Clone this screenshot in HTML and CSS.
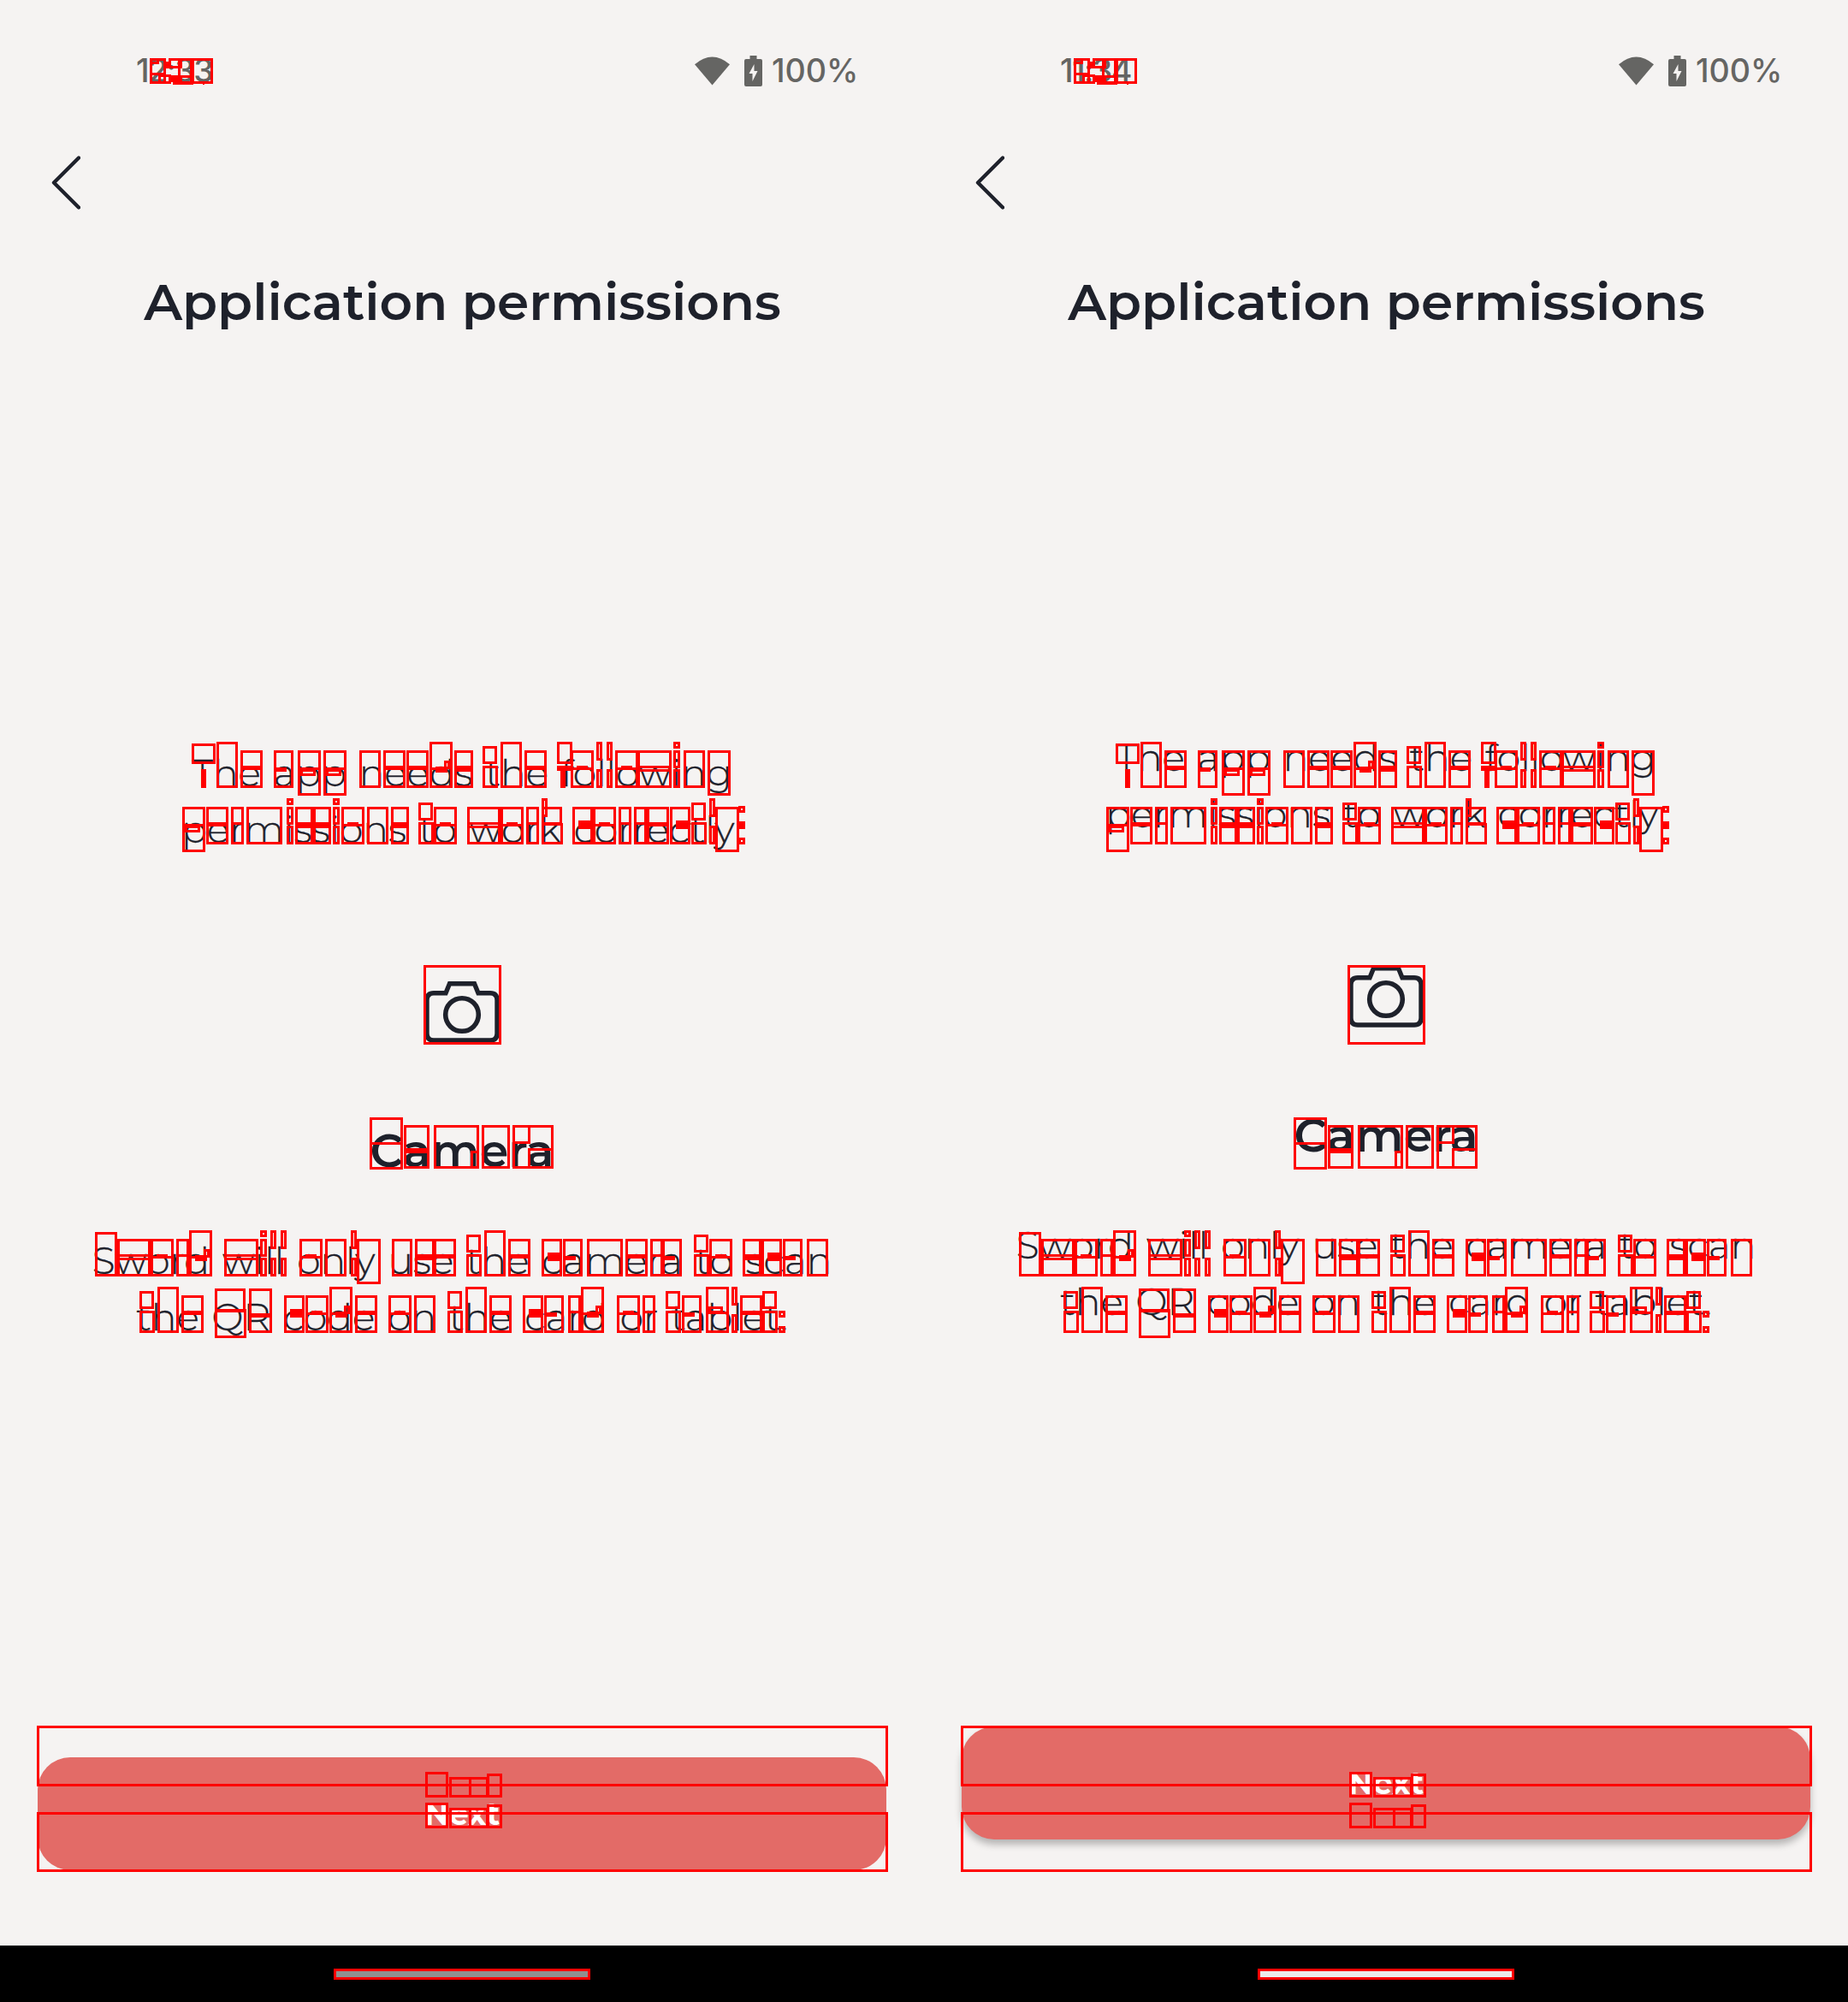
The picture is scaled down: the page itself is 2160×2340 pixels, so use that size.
FILE: index.html
```html
<!DOCTYPE html>
<html lang="en">
<head>
<meta charset="utf-8">
<title>Application permissions</title>
<link rel="stylesheet" href="styles.css">
</head>
<body>
<svg class="defs" width="0" height="0">
  <symbol id="wifi" viewBox="0 0 42 34"><path d="M0 9Q21-9 42 9L21 34Z"/></symbol>
  <symbol id="battery" viewBox="0 0 21 36"><path fill-rule="evenodd" d="M6.500 0H14.500V4H19Q21 4 21 6V34Q21 36 19 36H2Q0 36 0 34V6Q0 4 2 4H6.500ZM11.500 10L5.500 21H9.500V30L15.500 18H11.500Z"/></symbol>
  <symbol id="back" viewBox="0 0 34 64"><path d="M32 2.500L3 31.500L32 60.500" fill="none" stroke="currentColor" stroke-width="4.400" stroke-linecap="round" stroke-linejoin="round"/></symbol>
  <symbol id="camera" viewBox="0 0 90 84"><path d="M12 20.800H26L30.500 9.800H59.500L64 20.800H78Q86 20.800 86 29V68Q86 76 78 76H12Q4 76 4 68V29Q4 20.800 12 20.800Z" fill="none" stroke="currentColor" stroke-width="5.400"/><circle cx="45" cy="46" r="19.300" fill="none" stroke="currentColor" stroke-width="5.600"/></symbol>
</svg>
<div class="compare">
  <section class="screen before">
    <header class="top">
      <div class="status"><span class="time">12:33</span><svg class="wifi"><use href="#wifi"/></svg><svg class="battery"><use href="#battery"/></svg><span class="level">100%</span></div>
      <svg class="back"><use href="#back"/></svg>
      <h1 class="heading">Application permissions</h1>
    </header>
    <main class="content">
      <p class="copy"><span class="line">The app needs the following</span><span class="line">permissions to work correctly:</span></p>
      <svg class="camera"><use href="#camera"/></svg>
      <h2 class="name">Camera</h2>
      <p class="copy"><span class="line">Sword will only use the camera to scan</span><span class="line">the QR code on the card or tablet.</span></p>
    </main>
    <button class="next">Next</button>
    <footer class="nav"><span class="pill"></span></footer>
    <svg class="marks"></svg>
  </section>
  <section class="screen after">
    <header class="top">
      <div class="status"><span class="time">11:34</span><svg class="wifi"><use href="#wifi"/></svg><svg class="battery"><use href="#battery"/></svg><span class="level">100%</span></div>
      <svg class="back"><use href="#back"/></svg>
      <h1 class="heading">Application permissions</h1>
    </header>
    <main class="content">
      <p class="copy"><span class="line">The app needs the following</span><span class="line">permissions to work correctly:</span></p>
      <svg class="camera"><use href="#camera"/></svg>
      <h2 class="name">Camera</h2>
      <p class="copy"><span class="line">Sword will only use the camera to scan</span><span class="line">the QR code on the card or tablet.</span></p>
    </main>
    <button class="next">Next</button>
    <footer class="nav"><span class="pill"></span></footer>
    <svg class="marks"></svg>
  </section>
</div>
<script src="marks.js"></script>
</body>
</html>
```
FILE: styles.css
```css
* { box-sizing: border-box; margin: 0; padding: 0; }
body { background: #f5f3f2; font-family: Montserrat, Inter, sans-serif; color: #1e212b; }
.defs { position: absolute; }
.compare { display: grid; grid-template-columns: 1080px 1080px; height: 2340px; }
.screen { position: relative; display: flex; flex-direction: column; height: 2340px; overflow: hidden; background: #f5f3f2; }
.top { height: 385px; flex: none; padding-top: 60px; }
.status { display: flex; align-items: center; height: 46px; padding: 0 78px 0 159px; color: #656563; fill: #656563; font: 500 37.6px/46px Inter, sans-serif; }
.time { margin-right: auto; letter-spacing: -1.6px; }
.level { width: 100px; white-space: nowrap; }
.wifi { width: 41px; height: 34px; margin-right: 17px; }
.battery { width: 21px; height: 36px; margin-right: 11px; }
.back { display: block; width: 34px; height: 64px; margin: 76px 0 0 60px; }
.heading { margin-top: 73px; padding-left: 1px; font-size: 59.9px; line-height: 68px; font-weight: 600; text-align: center; white-space: nowrap; }
.content { flex: 1; display: flex; flex-direction: column; align-items: center; justify-content: center; padding-top: 2px; }
.copy { padding-top: 1px; font-size: 44px; line-height: 66px; font-weight: 300; word-spacing: 3.6px; text-align: center; white-space: nowrap; -webkit-text-stroke: .35px #1e212b; }
.line { display: block; }
.camera { width: 90px; height: 84px; margin-top: 138px; flex: none; }
.name { margin: 81px 0 54px; font-size: 54px; line-height: 80px; font-weight: 600; }
.next { flex: none; width: 992px; height: 132px; margin: 0 44px 88px; border: 0; border-radius: 38px; background: #e36b67; color: #fff; font: 700 36px/132px Montserrat, Inter, sans-serif; }
.after .next { margin-bottom: 124px; box-shadow: 0 6px 9px rgba(0, 0, 0, .26); }
.nav { flex: none; display: flex; align-items: center; justify-content: center; height: 66px; background: #000; }
.pill { width: 298px; height: 11px; background: #909090; }
.after .pill { background: #ebebeb; }
.marks { position: absolute; left: 0; top: 0; width: 1080px; height: 2340px; }
.box { fill: none; stroke: #f00; stroke-width: 3; }
.fill { fill: #f00; }
```
FILE: marks.js
```js
// Changed regions, as outer edges: left, top, right, bottom.
const boxes = [
  [175,68,194,98],[185,87,200,98],[197,68,213,80],[208,68,225,98],
  [202,88,226,99],[224,68,249,98],[175,68,186,75],
  [224,869,252,893],[651,867,669,893],
  [633,933,640,955],[633,943,657,964],[633,962,658,987],
  [863,942,871,950],[863,979,871,987],
  [495,1128,586,1221],
  [432,1306,471,1367],[432,1306,471,1338],[472,1315,502,1366],[507,1315,560,1366],
  [550,1345,560,1366],[563,1315,596,1366],[599,1315,647,1366],[599,1315,620,1337],[617,1342,647,1366],
  [111,1440,137,1492],[251,1506,287,1534],[251,1530,288,1564],[291,1506,318,1540],[291,1535,318,1558],
  [825,1504,852,1558],[828,1527,845,1535],[910,1532,918,1540],[910,1550,918,1558],
  [43,2017,1038,2088],[43,2118,1038,2188],
  [497,2071,524,2101],[525,2077,551,2101],[548,2077,571,2101],[569,2073,587,2101],
  [497,2107,524,2137],[525,2113,551,2137],[548,2113,571,2137],[569,2109,587,2137],
  [390,2301,690,2314]
];
const fills = [
  [177,85,192,88],[194,72,199,80],[199,88,204,96],[204,90,213,96],[237,96,239,99],
  [235,899,241,921],[651,895,669,901],[655,900,661,921],[863,960,871,969],
  [474,1342,501,1348],[825,1533,852,1536]
];

// Letters sit on a text row; "top" is the x-height line of that row.
const rows = [
  { top: 877, marks: 'h253-278 e281-307 a320-343 p348-375 p378-405 n420-445 e448-474 e475-501 d502-529 s531-553 t564-582 h585-610 e613-639 o667-694 l697-704 l709-716 o719-746 w745-785 i787-795 n799-824 g827-854' },
  { top: 943, marks: 'p213-240 e241-267 r270-285 m288-330 i335-343 s345-366 s366-387 i389-397 o399-426 n429-454 s457-478 t489-507 o507-534 w546-585 o585-612 r615-630 c669-693 o693-720 r723-738 r741-756 e756-782 c783-807 t808-826 l829-836 y836-864' },
  { top: 1448, marks: 'w137-176 o176-203 r206-221 d221-248 w262-302 i304-312 l316-323 l328-335 o350-377 n380-405 l410-417 y417-445 u458-482 s485-508 e507-533 t545-563 h566-591 e594-620 c633-657 a658-681 m686-728 e731-757 r760-775 a774-797 t811-829 o829-856 s868-890 c890-914 a915-938 n943-968' },
  { top: 1514, marks: 't163-181 h184-209 e212-238 c332-356 o357-384 d385-412 e415-441 o454-481 n484-509 t523-541 h544-569 e572-598 c611-635 a636-659 r664-679 d679-706 o721-748 r751-766 t778-796 a797-820 l855-862 e865-891 t891-909' }
];

for (const row of rows) {
  for (const mark of row.marks.split(' ')) {
    const kind = mark[0];
    const [a, b] = mark.slice(1).split('-').map(Number);
    const box = (y1, y2, l = 0, r = 0) => boxes.push([a + l, row.top + y1, b + r, row.top + y2]);
    const fill = (y1, y2, l = 0, r = 0) => fills.push([a + l, row.top + y1, b + r, row.top + y2]);
    if ('hd'.includes(kind)) box(-10, 44);
    if ('gyp'.includes(kind)) box(0, 53);
    if ('easocnmurw'.includes(kind)) box(0, 44);
    if (kind === 'e') fill(18, 23, 1, -1);
    if (kind === 's') fill(18, 25, 0, 0);
    if (kind === 'a') fill(20, 25, 3, -8);
    if (kind === 'c') fill(16, 26, 7, -1);
    if (kind === 'o') { fill(20, 23); fill(18, 22, 7, -7); }
    if (kind === 'p') { box(22, 30, 3, -6); fill(20, 23); }
    if (kind === 'd') { fill(19, 26, 7, -6); fill(20, 23, 0, -6); box(12, 22, 17, -3); }
    if (kind === 'w') { box(0, 21); box(22, 44); }
    if (kind === 'r') box(18, 21);
    if (kind === 'i') { box(-10, -2); box(0, 21); box(22, 44); }
    if (kind === 'l') { box(-10, 12); box(22, 44); }
    if (kind === 't') { box(-5, 16, 0, -1); box(18, 44); }
  }
}

const rect = (cls, x, y, w, h) => `<rect class="${cls}" x="${x}" y="${y}" width="${w}" height="${h}"/>`;
const art = boxes.map(([a, b, c, d]) => rect('box', a + 1.5, b + 1.5, Math.max(c - a - 3, 0.1), Math.max(d - b - 3, 0.1))).join('')
  + fills.map(([a, b, c, d]) => rect('fill', a, b, c - a, d - b)).join('');
document.querySelectorAll('.marks').forEach(svg => { svg.innerHTML = art; });
```
